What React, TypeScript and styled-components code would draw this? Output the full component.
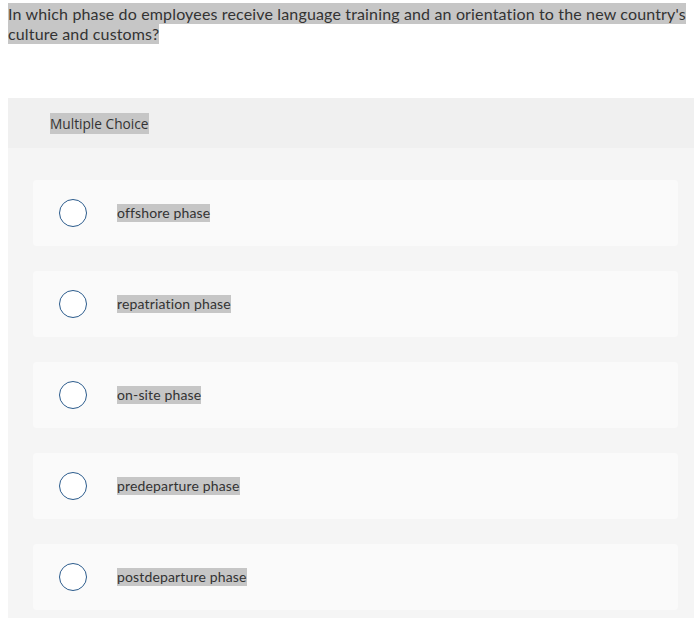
import React from "react";
import styled, { createGlobalStyle } from "styled-components";

const GlobalStyle = createGlobalStyle`
  body {
    margin: 0;
    background: #ffffff;
  }
`;

const Page = styled.div`
  padding: 4px 0 0 8px;
`;

const Question = styled.p`
  margin: 0;
  font-family: "Lato", "Liberation Sans", sans-serif;
  font-size: 16px;
  letter-spacing: 0.15px;
  line-height: 20px;
  color: #333333;
  width: 686px;
`;

const Marked = styled.span`
  background: #c6c6c6;
  padding: 1px 0;
`;

const Section = styled.section`
  margin-top: 54px;
  background: #f5f5f5;
  padding-bottom: 16px;
`;

const SectionHeader = styled.div`
  height: 50px;
  background: #f0f0f0;
  display: flex;
  align-items: center;
  padding-left: 42px;
  font-family: "Open Sans", "Liberation Sans", sans-serif;
  font-size: 13.7px;
  color: #333333;
`;

const Choices = styled.div`
  display: flex;
  flex-direction: column;
  gap: 25px;
  padding: 32px 16px 0 25px;
`;

const Choice = styled.label`
  height: 66px;
  background: #fafafa;
  border-radius: 4px;
  display: flex;
  align-items: center;
  padding-left: 26px;
  gap: 30px;
  cursor: pointer;
`;

const Radio = styled.span`
  width: 28px;
  height: 28px;
  box-sizing: border-box;
  border: 1.5px solid #2b5b8c;
  border-radius: 50%;
  background: #ffffff;
  flex-shrink: 0;
`;

const ChoiceText = styled.span`
  font-family: "Lato", "Liberation Sans", sans-serif;
  font-size: 14px;
  letter-spacing: 0.15px;
  line-height: 18px;
  color: #333333;
  background: #c6c6c6;
`;

const options = [
  "offshore phase",
  "repatriation phase",
  "on-site phase",
  "predeparture phase",
  "postdeparture phase",
];

export default function App() {
  return (
    <>
      <GlobalStyle />
      <Page>
        <Question>
          <Marked>
            In which phase do employees receive language training and an orientation to the new country's culture and customs?
          </Marked>
        </Question>
        <Section>
          <SectionHeader>
            <Marked>Multiple Choice</Marked>
          </SectionHeader>
          <Choices>
            {options.map((o) => (
              <Choice key={o}>
                <Radio />
                <ChoiceText>{o}</ChoiceText>
              </Choice>
            ))}
          </Choices>
        </Section>
      </Page>
    </>
  );
}
